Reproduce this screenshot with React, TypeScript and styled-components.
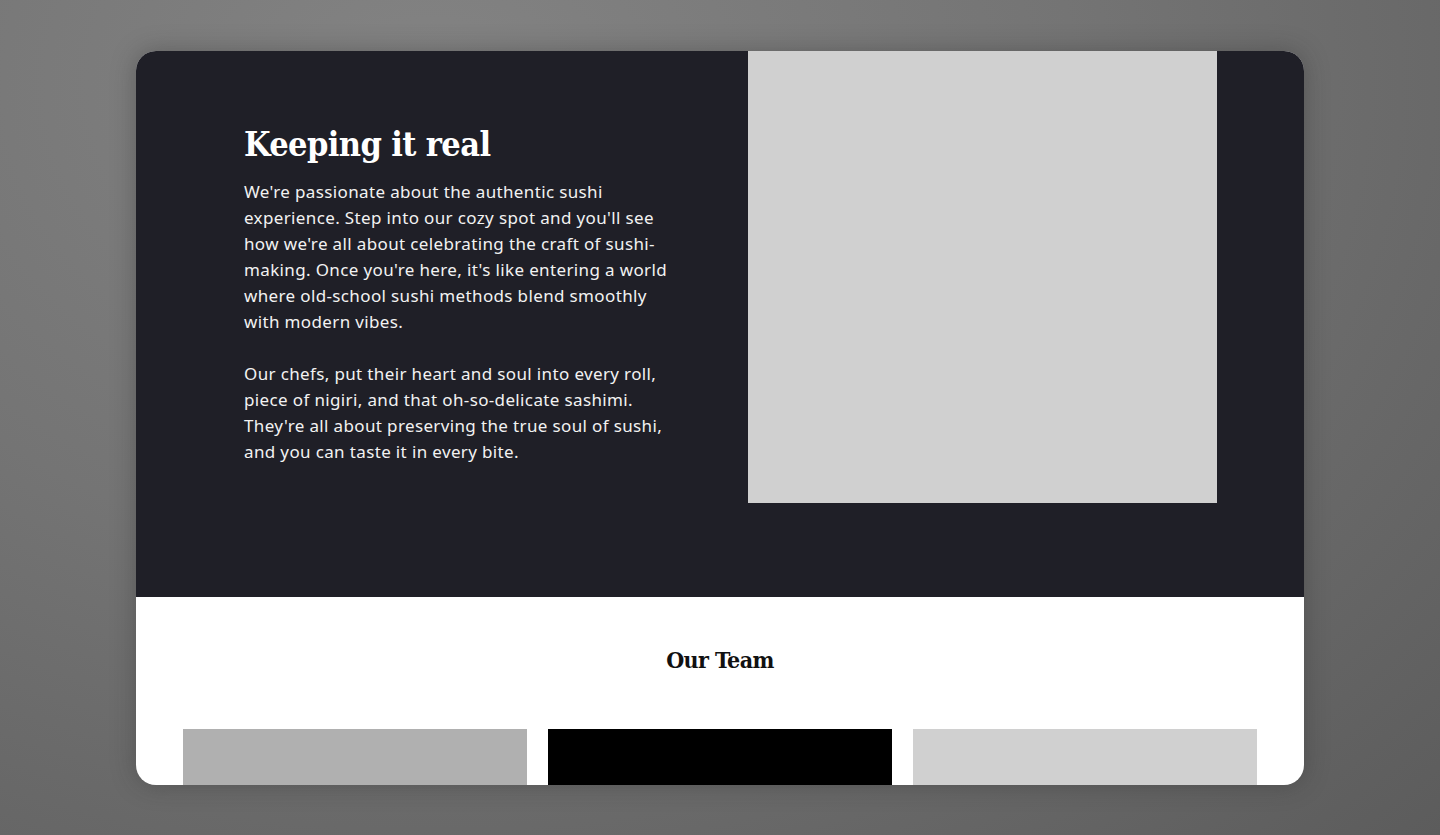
import React from 'react'
import styled, { createGlobalStyle } from 'styled-components'

const GlobalStyle = createGlobalStyle`
  html, body {
    margin: 0;
    padding: 0;
  }
  body {
    background: radial-gradient(ellipse at 30% 10%, #838383 0%, #747474 45%, #5c5c5c 100%);
    min-height: 835px;
    font-family: 'Noto Sans', 'Open Sans', sans-serif;
  }
`

const Stage = styled.div`
  height: 835px;
  padding-top: 51px;
  box-sizing: border-box;
  display: flex;
  justify-content: center;
  overflow: hidden;
`

const Card = styled.div`
  width: 1168px;
  height: 734px;
  border-radius: 20px;
  overflow: hidden;
  background: #fff;
  box-shadow: 0 0 24px rgba(40, 40, 40, 0.35);
  display: flex;
  flex-direction: column;
`

const Hero = styled.section`
  background: #1f1f27;
  height: 546px;
  flex-shrink: 0;
  display: flex;
  align-items: flex-start;
  padding: 0 87px 0 108px;
  box-sizing: border-box;
`

const Copy = styled.div`
  width: 440px;
  padding-top: 71px;
  color: #f2f2f2;
`

const Title = styled.h1`
  margin: 0 0 13px;
  font-family: 'DejaVu Serif', 'Liberation Serif', serif;
  font-stretch: condensed;
  font-weight: 700;
  font-size: 34px;
  line-height: 44px;
  letter-spacing: -0.6px;
  color: #fff;
`

const Paragraph = styled.p`
  margin: 0 0 26px;
  font-size: 17px;
  line-height: 26px;
  letter-spacing: 0.36px;
  white-space: nowrap;
`

const Photo = styled.div`
  margin-left: auto;
  width: 469px;
  height: 452px;
  background: #d0d0d0;
`

const Team = styled.section`
  flex: 1;
  padding: 0 47px;
  display: flex;
  flex-direction: column;
`

const TeamTitle = styled.h2`
  margin: 46px 0 0;
  height: 34px;
  text-align: center;
  font-family: 'DejaVu Serif', 'Liberation Serif', serif;
  font-stretch: condensed;
  font-weight: 700;
  font-size: 23px;
  line-height: 34px;
  letter-spacing: -0.6px;
  color: #111;
`

const Members = styled.div`
  margin-top: 52px;
  display: grid;
  grid-template-columns: repeat(3, 1fr);
  gap: 21px;
  flex: 1;
`

const Member = styled.div<{ $tone: string }>`
  background: ${p => p.$tone};
  height: 300px;
`

const App = () => (
  <>
    <GlobalStyle />
    <Stage>
      <Card>
        <Hero>
          <Copy>
            <Title>Keeping it real</Title>
            <Paragraph>
              We're passionate about the authentic sushi
              <br />
              experience. Step into our cozy spot and you'll see
              <br />
              how we're all about celebrating the craft of sushi-
              <br />
              making. Once you're here, it's like entering a world
              <br />
              where old-school sushi methods blend smoothly
              <br />
              with modern vibes.
            </Paragraph>
            <Paragraph>
              Our chefs, put their heart and soul into every roll,
              <br />
              piece of nigiri, and that oh-so-delicate sashimi.
              <br />
              They're all about preserving the true soul of sushi,
              <br />
              and you can taste it in every bite.
            </Paragraph>
          </Copy>
          <Photo />
        </Hero>
        <Team>
          <TeamTitle>Our Team</TeamTitle>
          <Members>
            <Member $tone="#b0b0b0" />
            <Member $tone="#000000" />
            <Member $tone="#d0d0d0" />
          </Members>
        </Team>
      </Card>
    </Stage>
  </>
)

export default App
